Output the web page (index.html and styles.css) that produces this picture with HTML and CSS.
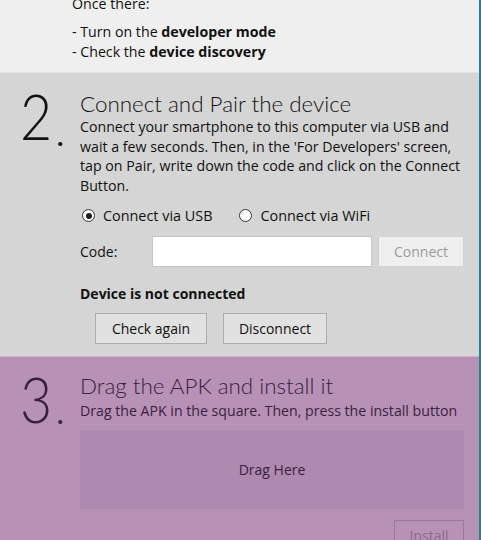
FILE: index.html
```html
<!DOCTYPE html>
<html>
<head>
<meta charset="utf-8">
<link rel="stylesheet" href="styles.css">
</head>
<body>
<div class="app">
  <section class="step step-1">
    <div class="content">
      <p class="once">Once there:</p>
      <p class="list">- Turn on the <b>developer mode</b><br>- Check the <b>device discovery</b></p>
    </div>
  </section>
  <section class="step step-2">
    <div class="num"><span class="digit">2</span><span class="dot">.</span></div>
    <div class="content">
      <h2 class="title">Connect and Pair the device</h2>
      <p class="desc">Connect your smartphone to this computer via USB and wait a few seconds. Then, in the 'For Developers' screen, tap on Pair, write down the code and click on the Connect Button.</p>
      <div class="radios">
        <label class="radio"><span class="circle checked"></span>Connect via USB</label>
        <label class="radio"><span class="circle"></span>Connect via WiFi</label>
      </div>
      <div class="code-row">
        <span class="code-label">Code:</span>
        <div class="input"></div>
        <div class="btn disabled">Connect</div>
      </div>
      <p class="status">Device is not connected</p>
      <div class="actions">
        <div class="btn">Check again</div>
        <div class="btn">Disconnect</div>
      </div>
    </div>
  </section>
  <section class="step step-3">
    <div class="num"><span class="digit">3</span><span class="dot">.</span></div>
    <div class="content">
      <h2 class="title">Drag the APK and install it</h2>
      <p class="subtitle">Drag the APK in the square. Then, press the install button</p>
      <div class="drop">Drag Here</div>
      <div class="install-row"><div class="btn install">Install</div></div>
    </div>
  </section>
</div>
</body>
</html>
```
FILE: styles.css
```css
html, body {
  margin: 0;
  padding: 0;
  height: 540px;
  overflow: hidden;
}
body {
  font-family: "Open Sans", "Noto Sans", sans-serif;
  font-size: 14px;
  color: #111;
}
.app {
  width: 479px;
  border-right: 2px solid #2d7f86;
  height: 540px;
  display: flex;
  flex-direction: column;
}
.step {
  display: flex;
  flex: none;
}
.num {
  width: 80px;
  flex: none;
  position: relative;
}
.content {
  flex: 1;
  min-width: 0;
  padding-right: 15px;
}
.step-1 {
  background: #efefef;
  height: 72px;
  border-bottom: 1px solid #e3e3e3;
  padding-left: 72px;
}
.once {
  margin: -6px 0 0 0;
  font-size: 14.2px;
  line-height: 20px;
}
.list {
  margin: 8px 0 0 0;
  font-size: 14.2px;
  line-height: 20px;
}
.list b { font-weight: 700; }
.step-2 {
  background: #d5d5d5;
  height: 283px;
  border-bottom: 1px solid #cbb6ca;
}
.digit {
  position: absolute;
  left: 20px;
  top: 11px;
  font-family: "Lato", sans-serif;
  font-weight: 300;
  font-size: 63px;
  line-height: 63px;
  transform: scaleX(0.88);
  transform-origin: left top;
}
.dot {
  position: absolute;
  left: 57px;
  top: 43px;
  font-family: "Lato", sans-serif;
  font-weight: 700;
  font-size: 27px;
  line-height: 40px;
}
.step-3 .digit { top: 10px; }
.step-3 .dot { top: 37px; }
.title {
  margin: 18px 0 0 0;
  font-family: "Lato", sans-serif;
  font-weight: 300;
  font-size: 22.4px;
  line-height: 26px;
}
.desc {
  margin: 0;
  font-size: 14.2px;
  line-height: 19.7px;
}
.radios {
  display: flex;
  gap: 25px;
  margin-top: 10px;
  height: 20px;
  align-items: center;
  font-size: 14.4px;
}
.radio {
  display: flex;
  align-items: center;
  gap: 8px;
}
.circle {
  width: 11px;
  height: 11px;
  border: 1px solid #333;
  border-radius: 50%;
  background: #fff;
  display: flex;
  align-items: center;
  justify-content: center;
  margin-left: 2px;
}
.circle.checked::after {
  content: "";
  width: 6px;
  height: 6px;
  border-radius: 50%;
  background: #1e1e1e;
}
.code-row {
  display: flex;
  align-items: center;
  margin-top: 10px;
  height: 31px;
}
.code-label { width: 72px; flex: none; }
.input {
  width: 218px;
  height: 29px;
  border: 1px solid #c4c4c4;
  background: #fff;
}
.btn {
  box-sizing: border-box;
  height: 31px;
  border: 1px solid #adadad;
  background: #e1e1e1;
  display: flex;
  align-items: center;
  justify-content: center;
}
.code-row .btn {
  margin-left: 6px;
  width: 86px;
}
.btn.disabled {
  background: #efefef;
  border-color: #d2d2d2;
  color: #9c9c9c;
}
.status {
  margin: 17px 0 0 0;
  font-weight: 700;
  line-height: 20px;
}
.actions {
  display: flex;
  gap: 16px;
  margin: 9px 0 0 15px;
}
.actions .btn:first-child { width: 112px; }
.actions .btn:last-child { width: 104px; }
.step-3 {
  background: #b792b6;
  flex: 1;
  color: #3b2140;
}
.step-3 .title { margin-top: 16px; }
.subtitle {
  margin: 2px 0 0 0;
  font-size: 14.15px;
  line-height: 19.7px;
}
.drop {
  margin-top: 9px;
  height: 79px;
  background: #ae89b0;
  display: flex;
  align-items: center;
  justify-content: center;
}
.install-row {
  display: flex;
  justify-content: flex-end;
  margin-top: 11px;
}
.btn.install {
  width: 70px;
  background: transparent;
  border-color: #9a7a9c;
  color: #8a6c8d;
}
```
